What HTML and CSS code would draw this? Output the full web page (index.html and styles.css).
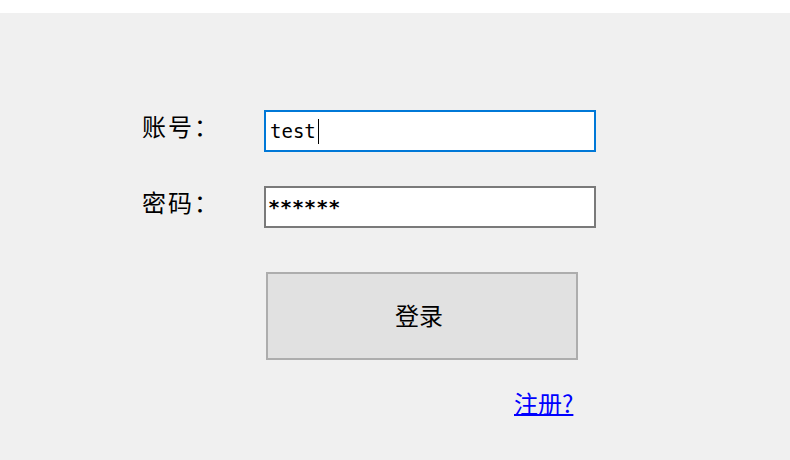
FILE: index.html
```html
<!DOCTYPE html>
<html lang="zh-CN">
<head>
<meta charset="utf-8">
<title>登录</title>
<link rel="stylesheet" href="styles.css">
</head>
<body>
<div class="topbar"></div>
<main class="form">
  <div class="row">
    <span class="label">账号：</span>
    <div class="field focused"><span class="value">test</span><span class="caret"></span></div>
  </div>
  <div class="row row-pass">
    <span class="label">密码：</span>
    <div class="field"><span class="value secret">******</span></div>
  </div>
  <button class="btn" type="button">登录</button>
  <a class="link" href="#">注册?</a>
</main>
</body>
</html>
```
FILE: styles.css
```css
html, body {
  margin: 0;
  padding: 0;
}
body {
  width: 790px;
  height: 460px;
  background: #f0f0f0;
  font-family: "Noto Sans CJK SC", "Noto Sans", sans-serif;
  color: #000;
  overflow: hidden;
}
.topbar {
  height: 13px;
  background: #ffffff;
}
.form {
  display: flex;
  flex-direction: column;
  align-items: flex-start;
  margin-left: 142px;
  width: 454px;
  padding-top: 97px;
}
.row {
  display: flex;
  align-items: flex-start;
  width: 100%;
  height: 42px;
}
.row-pass {
  margin-top: 34px;
}
.label {
  width: 122px;
  font-size: 24px;
  line-height: 31px;
  letter-spacing: 2px;
  white-space: nowrap;
}
.field {
  box-sizing: border-box;
  width: 332px;
  height: 42px;
  background: #fff;
  border: 2px solid #7a7a7a;
  display: flex;
  align-items: center;
  padding-left: 4px;
}
.field.focused {
  border-color: #0078d7;
}
.value {
  font-family: "DejaVu Sans Mono", "Liberation Mono", monospace;
  font-size: 19px;
  line-height: 24px;
  color: #000;
}
.secret {
  margin-left: -2px;
  font-size: 20px;
  font-weight: bold;
}
.caret {
  display: inline-block;
  width: 1px;
  height: 25px;
  background: #000;
  margin-left: 2px;
}
.btn {
  box-sizing: border-box;
  margin-top: 44px;
  margin-left: 124px;
  width: 312px;
  height: 88px;
  background: #e1e1e1;
  border: 2px solid #adadad;
  font-family: "Noto Sans CJK SC", sans-serif;
  font-size: 24px;
  color: #000;
  padding: 0 6px 4px 0;
}
.link {
  margin-top: 28px;
  margin-left: 372px;
  font-size: 24px;
  line-height: 30px;
  color: #0000ff;
  text-decoration: underline;
  text-underline-offset: 1px;
}
```
